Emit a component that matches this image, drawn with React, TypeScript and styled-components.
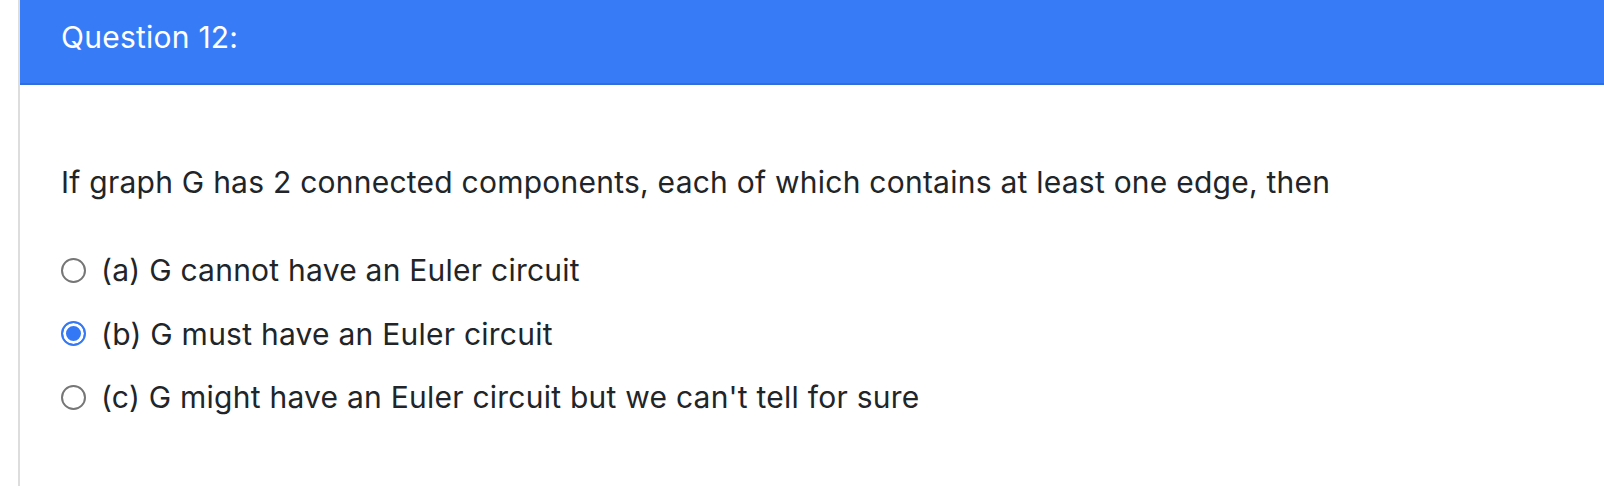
import styled, { createGlobalStyle } from "styled-components";

const GlobalStyle = createGlobalStyle`
  html, body {
    margin: 0;
    padding: 0;
    background: #ffffff;
  }
  body {
    font-family: Inter, "Noto Sans", "Liberation Sans", sans-serif;
    color: #212529;
    letter-spacing: 0.24px;
  }
`;

const Page = styled.div`
  padding-left: 18px;
  min-height: 486px;
  box-sizing: border-box;
`;

const Card = styled.div`
  border-left: 2px solid #dddddd;
  min-height: 486px;
  box-sizing: border-box;
`;

const CardHeader = styled.div`
  height: 85px;
  box-sizing: border-box;
  background: #377cf6;
  border-bottom: 2px solid #2f6edb;
  display: flex;
  align-items: center;
  padding: 0 41px 9px;
  color: #ffffff;
  font-size: 30px;
  line-height: 36px;
`;

const CardBody = styled.div`
  padding: 79px 41px 0;
`;

const Prompt = styled.p`
  margin: 0 0 52px;
  font-size: 30px;
  line-height: 36px;
`;

const Options = styled.div`
  display: flex;
  flex-direction: column;
  gap: 27.5px;
`;

const OptionRow = styled.label`
  display: flex;
  align-items: center;
  gap: 15px;
  font-size: 30px;
  line-height: 36px;
`;

const Radio = styled.span<{ $checked?: boolean }>`
  width: 25px;
  height: 25px;
  border-radius: 50%;
  box-sizing: border-box;
  flex-shrink: 0;
  border: ${(p) => (p.$checked ? "2px solid #3478f6" : "2px solid #767676")};
  background: ${(p) => (p.$checked ? "#3478f6" : "#ffffff")};
  box-shadow: ${(p) => (p.$checked ? "inset 0 0 0 3px #ffffff" : "none")};
`;

const options = [
  { label: "(a) G cannot have an Euler circuit", checked: false },
  { label: "(b) G must have an Euler circuit", checked: true },
  { label: "(c) G might have an Euler circuit but we can't tell for sure", checked: false },
];

export default function App() {
  return (
    <>
      <GlobalStyle />
      <Page>
        <Card>
          <CardHeader>Question 12:</CardHeader>
          <CardBody>
            <Prompt>
              If graph G has 2 connected components, each of which contains at least one edge, then
            </Prompt>
            <Options>
              {options.map((o) => (
                <OptionRow key={o.label}>
                  <Radio $checked={o.checked} />
                  <span>{o.label}</span>
                </OptionRow>
              ))}
            </Options>
          </CardBody>
        </Card>
      </Page>
    </>
  );
}
